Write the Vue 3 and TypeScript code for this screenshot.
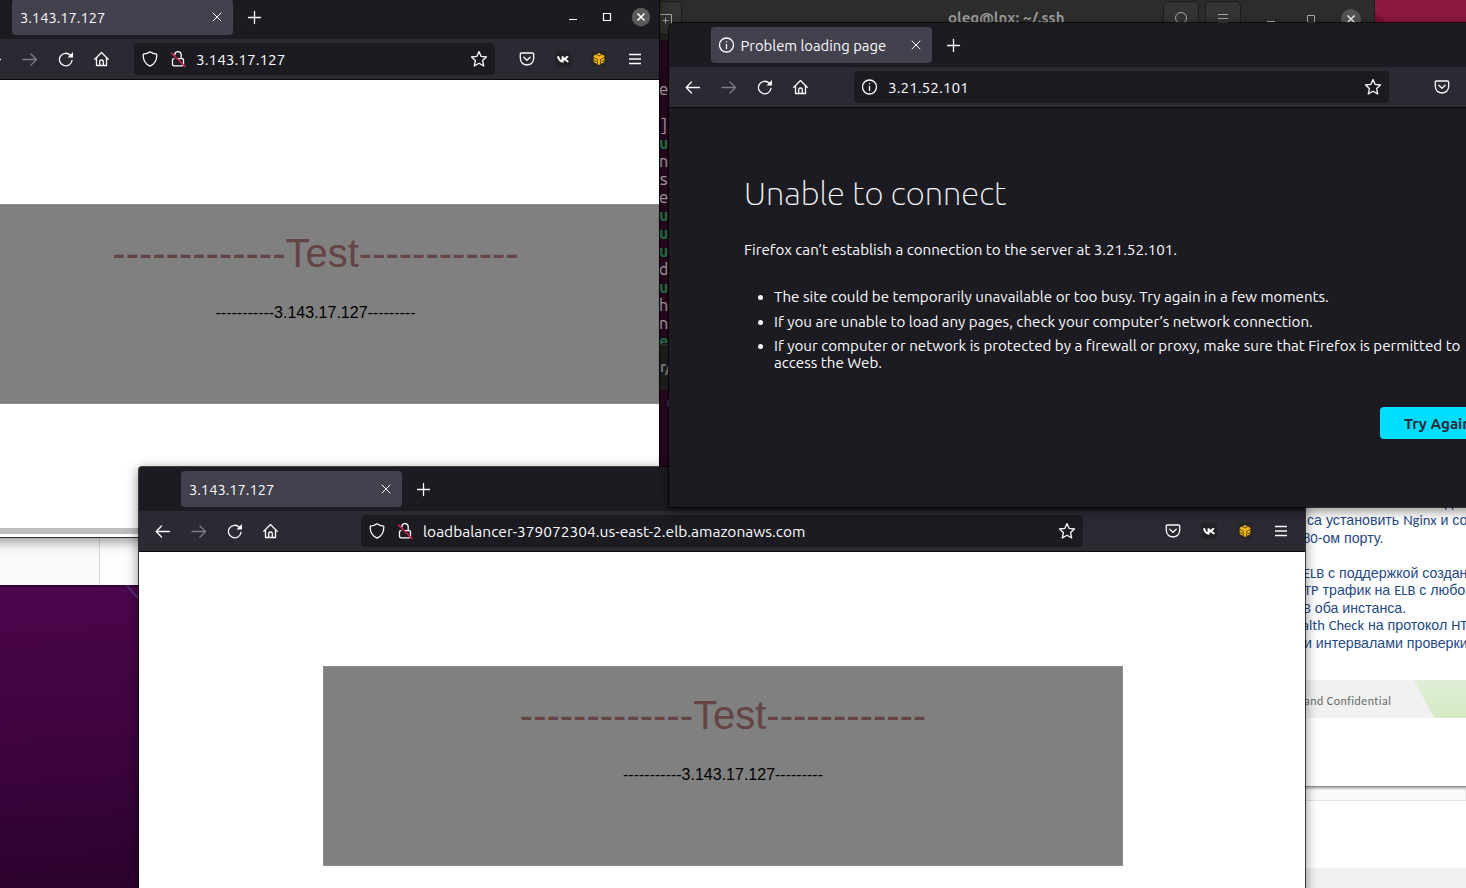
<script setup lang="ts">
interface BrowserWin {
  id: string
  tab: string
  url: string
  kind: 'page' | 'error'
  controls: boolean
}

const windows: BrowserWin[] = [
  { id: 'first', tab: '3.143.17.127', url: '3.143.17.127', kind: 'page', controls: true },
  { id: 'balancer', tab: '3.143.17.127', url: 'loadbalancer-379072304.us-east-2.elb.amazonaws.com', kind: 'page', controls: false },
  { id: 'failed', tab: 'Problem loading page', url: '3.21.52.101', kind: 'error', controls: false },
]

const termRows: { t: string; g?: boolean }[] = [
  { t: 'e' }, { t: '' }, { t: ']' }, { t: 'u', g: true }, { t: 'n' }, { t: 's' }, { t: 'e' },
  { t: 'u', g: true }, { t: 'u', g: true }, { t: 'u', g: true }, { t: 'd' }, { t: 'u', g: true },
  { t: 'h' }, { t: 'n' }, { t: 'e', g: true },
]

const docLines = [
  'с использованием создания',
  'са установить Nginx и соз',
  '80-ом порту.',
  '',
  'ELB с поддержкой создан',
  'TP трафик на ELB с любог',
  'B оба инстанса.',
  'alth Check на протокол HTT',
  'и интервалами проверки',
]

// Latin runs use a humanist face, Cyrillic falls to a grotesque one.
function runs(line: string): { text: string; latin: boolean }[] {
  return (line.match(/[A-Za-z0-9]+|[^A-Za-z0-9]+/g) ?? []).map((text) => ({
    text,
    latin: /[A-Za-z0-9]/.test(text),
  }))
}
</script>

<template>
  <div class="desktop">
    <svg class="arc" width="20" height="20" viewBox="0 0 20 20"><path d="M7 0Q12 8 20 14" /></svg>

    <section class="doc">
      <div class="doc-text">
        <p v-for="(line, i) in docLines" :key="i" :class="'l' + i"><span v-for="(r, j) in runs(line)" :key="j" :class="{ lat: r.latin }">{{ r.text }}</span></p>
      </div>
      <div class="doc-foot">
        <span>and Confidential</span>
        <svg width="52" height="38" viewBox="0 0 52 38">
          <defs><linearGradient id="leaf" x1="0" y1="0" x2="0" y2="1"><stop offset="0" stop-color="#dfeed5" /><stop offset="1" stop-color="#d4eac3" /></linearGradient></defs>
          <path d="M0 0H52V38H20Z" fill="url(#leaf)" />
        </svg>
      </div>
      <div class="doc-rest"></div>
      <div class="doc-gap"></div>
      <div class="doc-next"></div>
      <div class="doc-next-foot"></div>
    </section>

    <section class="files"><div class="files-side"></div></section>

    <section class="terminal">
      <header class="term-head">
        <div class="term-btn newtab">
          <svg width="16" height="16" viewBox="0 0 16 16"><path d="M1 3.5H12.5V13M6.5 6.500V12.500M3.5 9.500H9.5" /></svg>
        </div>
        <div class="term-title">oleg@lnx: ~/.ssh</div>
        <div class="term-btn"><svg width="16" height="16" viewBox="0 0 16 16"><circle cx="8" cy="7" r="5.5" /><path d="M12 11l3 3" /></svg></div>
        <div class="term-btn"><svg width="16" height="16" viewBox="0 0 16 16"><path d="M3 3.5H13M3 7.5H13M3 11.5H13" /></svg></div>
        <svg class="term-ctl" width="112" height="30" viewBox="0 0 112 30">
          <path d="M2 20.5H10M42.5 14.5H49.5V21.5H42.5Z" />
          <circle cx="86" cy="18" r="10" /><path class="x" d="M82.500 14.500L89.500 21.500M89.500 14.500L82.500 21.500" />
        </svg>
      </header>
      <div class="term-body">
        <div class="term-lines">
          <div v-for="(r, i) in termRows" :key="i" class="row" :class="{ green: r.g }">{{ r.t }}</div>
        </div>
        <div class="term-sub">r/</div>
        <div class="term-tail">r</div>
      </div>
    </section>

    <section v-for="w in windows" :key="w.id" class="win" :class="w.id">
      <header class="titlebar">
        <div class="tab">
          <svg v-if="w.kind === 'error'" class="ico info" width="16" height="16" viewBox="0 0 16 16"><circle cx="7.500" cy="8" r="7" /><path d="M7.500 7.500V11.500M7.500 4.600V4.800" /></svg>
          <span class="tab-label">{{ w.tab }}</span>
          <svg class="ico thin" width="16" height="16" viewBox="0 0 16 16"><path d="M4 4L12 12M12 4L4 12" /></svg>
        </div>
        <svg class="ico plus" width="16" height="16" viewBox="0 0 16 16"><path d="M7.500 2.500V14.500M1.500 8.500H13.500" /></svg>
        <svg v-if="w.controls" class="ctl" width="84" height="24" viewBox="0 0 84 24">
          <path d="M2 14.500H10M36.500 8.500H43.500V15.500H36.500Z" />
          <circle cx="74" cy="12" r="9.200" /><path d="M70.500 8.500L77.500 15.500M77.500 8.500L70.500 15.500" />
        </svg>
      </header>

      <div class="toolbar">
        <div class="nav">
          <svg class="ico" width="16" height="16" viewBox="0 0 16 16"><path d="M14.500 8.500H1.500M6.500 3L1.200 8.500L6.500 14" /></svg>
          <svg class="ico dim" width="16" height="16" viewBox="0 0 16 16"><path d="M1 8.500H14M9 3L14.500 8.500L9 14" /></svg>
          <svg class="ico" width="16" height="16" viewBox="0 0 16 16"><path d="M14 9.400A6.300 6.300 0 1 1 12.300 4.200" /><path class="solid" d="M15 1V6.500H9.500Z" /></svg>
          <svg class="ico" width="16" height="16" viewBox="0 0 16 16"><path d="M.8 8.200L7.500 1.500L14.200 8.200M2.500 7V14.500H12.500V7M5.700 14V10.200Q5.700 9 7.500 9T9.300 10.200V14" /></svg>
        </div>
        <div class="urlbar">
          <template v-if="w.kind === 'page'">
            <svg class="ico" width="16" height="16" viewBox="0 0 16 16"><path d="M8 .8Q10.500 2.800 14.700 3.200Q15.500 11.500 8 15.200Q.5 11.500 1.300 3.200Q5.500 2.800 8 .8Z" /></svg>
            <svg class="ico lock" width="16" height="16" viewBox="0 0 16 16"><path d="M4.800 4V3.800A3.200 3.200 0 0 1 11.200 4V7.500M8 7.700H12.500Q13.500 7.700 13.500 9V13.500Q13.500 14.800 12 14.800H4Q2.500 14.800 2.500 13V9Q2.500 7.700 4 7.700" /><path class="slash" d="M1.500 2L15 15.500" /></svg>
          </template>
          <svg v-else class="ico info" width="16" height="16" viewBox="0 0 16 16"><circle cx="7.500" cy="8" r="7" /><path d="M7.500 7.500V11.500M7.500 4.600V4.800" /></svg>
          <span class="url">{{ w.url }}</span>
          <svg class="ico star" width="18" height="18" viewBox="0 0 18 18"><path d="M9 1.600L11.200 6.400L16.500 7L12.600 10.600L13.700 16L9 13.300L4.300 16L5.400 10.600L1.500 7L6.800 6.400Z" /></svg>
        </div>
        <div class="ext">
          <svg class="ico" width="16" height="16" viewBox="0 0 16 16"><path d="M2.500 2H13.500Q14.700 2 14.700 3.200V7.500Q14.200 13.500 8 14Q1.800 13.500 1.300 7.500V3.200Q1.300 2 2.500 2ZM4.800 6.200L8 9.200L11.200 6.200" /></svg>
          <svg width="16" height="16" viewBox="0 0 16 16"><rect width="16" height="16" rx="3" fill="#222226" /><path d="M3 5.200Q4 10 7.600 10.500V5.200M12.800 5.200Q11.500 7.500 8 8Q11.500 8.500 13.200 11" fill="none" stroke="#fff" stroke-width="2" /></svg>
          <svg width="16" height="16" viewBox="0 0 16 16"><rect width="16" height="16" rx="3" fill="#26262a" /><path d="M8 2L13.300 4.800V11L8 14L2.700 11V4.800Z" fill="#f5b80e" /><path d="M3 6.500L6.300 8.500V13M13 6.500L9.700 8.500V13M5.300 3.500L8 5L10.700 3.500M3 9.500L5 10.700M13 9.500L11 10.700" fill="none" stroke="#2b2611" stroke-width=".8" /></svg>
          <svg class="ico menu" width="16" height="16" viewBox="0 0 16 16"><path d="M2 3.500H14M2 8H14M2 12.500H14" /></svg>
        </div>
      </div>

      <main v-if="w.kind === 'page'" class="page">
        <div class="card">
          <h1>-------------Test------------</h1>
          <p>-----------3.143.17.127---------</p>
        </div>
        <div class="strip"></div>
      </main>
      <main v-else class="error">
        <h1>Unable to connect</h1>
        <p class="lead">Firefox can’t establish a connection to the server at 3.21.52.101.</p>
        <ul>
          <li>The site could be temporarily unavailable or too busy. Try again in a few moments.</li>
          <li>If you are unable to load any pages, check your computer’s network connection.</li>
          <li>If your computer or network is protected by a firewall or proxy, make sure that Firefox is permitted to<br />access the Web.</li>
        </ul>
        <button>Try Again</button>
      </main>
    </section>
  </div>
</template>

<style>
html, body { margin: 0; overflow: hidden; }
</style>

<style scoped>
* { box-sizing: border-box; }
svg { display: block; flex: none; }
h1, p, ul { margin: 0; padding: 0; font-weight: 400; }
.desktop {
  position: relative; width: 1466px; height: 888px; overflow: hidden;
  font-family: Ubuntu, "Noto Sans", sans-serif;
  background: linear-gradient(176deg, #4b064c 0, #4b064c 590px, #3f0440 740px, #2b022d 890px);
}
.desktop::before {
  content: ""; position: absolute; left: 1370px; top: 0; width: 96px; height: 60px;
  background: linear-gradient(40deg, #7b0f37 0 36%, #8c1a3e 37%);
}
.arc { position: absolute; left: 120px; top: 585px; fill: none; stroke: #55307c; stroke-width: 2; }

.doc { position: absolute; left: 1300px; top: 490px; width: 166px; height: 398px; display: flex; flex-direction: column; background: #fff; overflow: hidden; }
.doc-text { height: 190px; padding-top: 4px; color: #1f4a83; font: 14.200px/17.500px "Liberation Sans", sans-serif; white-space: pre; }
.doc-text p { height: 17.500px; }
.doc-text .l0 { height: 18px; line-height: 16px; }
.lat { font-family: Carlito, Lato, sans-serif; font-size: 14.500px; }
.l1 { padding-left: 7px; }
.l2 { padding-left: 3px; }
.l4 { padding-left: 3px; }
.l5 { padding-left: 4px; }
.l6 { padding-left: 3px; }
.l7 { padding-left: 2px; }
.l8 { padding-left: 4px; }
.doc-foot { height: 38px; background: #f1f1f1; display: flex; align-items: center; justify-content: space-between; padding-left: 4px; color: #6b6b6b; font: 12px/16px Carlito, Lato, sans-serif; letter-spacing: .45px; flex: none; white-space: nowrap; }
.doc-foot span { padding-top: 4px; }
.doc-rest { height: 68px; flex: none; }
.doc-gap { height: 15px; flex: none; background: #fafafa; border-top: 1px solid #858a87; border-bottom: 1px solid #e2e2e2; box-shadow: inset 0 2px 2px #bbb; }
.doc-next { height: 67px; flex: none; }
.doc-next-foot { flex: 1; background: #f1f1f1; }

.files { position: absolute; left: 0; top: 537px; width: 140px; height: 48px; background: #fdfdfd; display: flex; box-shadow: 0 1px 2px #0008; }
.files-side { width: 100px; background: #fafafa; border-right: 1px solid #dcdcdc; }

.terminal { position: absolute; left: 640px; top: -6px; width: 735px; height: 480px; display: flex; flex-direction: column; background: #2d0922; }
.term-head { height: 47px; flex: none; display: flex; align-items: flex-start; padding-top: 7px; background: linear-gradient(#2b2b2b, #2e2e2e 80%, #262626); border-bottom: 1px solid #191919; border-right: 1px solid #1d1d1d; }
.term-btn { width: 36px; height: 34px; border: 1px solid #1d1d1d; border-radius: 5px; background: #343434; display: flex; justify-content: center; padding-top: 9px; margin-right: 6px; }
.newtab { width: 42px; margin: 0; justify-content: flex-end; padding-right: 6px; }
.term-btn svg, .term-ctl { fill: none; stroke: #a9a9a6; stroke-width: 1; }
.term-title { flex: 1; padding: 7px 0 0 266px; color: #9b9b98; font-size: 15.100px; line-height: 20px; font-weight: 700; white-space: nowrap; }
.term-ctl { width: 112px; height: 30px; margin: 0 -3px 0 18px; }
.term-ctl circle { fill: #535353; stroke: none; }
.term-ctl .x { stroke: #eee; stroke-width: 1.6; }
.term-body { font: 16.500px/18px "Ubuntu Mono", "DejaVu Sans Mono", monospace; color: #c5bfc4; flex: 1; }
.term-lines { height: 303px; padding-top: 39px; overflow: hidden; }
.row { height: 18px; padding-left: 19px; }
.green { color: #26854f; font-weight: 700; }
.term-sub { height: 46px; background: #242424; border-top: 1px solid #3a3a3a; padding: 12px 0 0 20px; font: 700 14.500px/20px Ubuntu, "Noto Sans", sans-serif; color: #999; }
.term-tail { padding: 3px 0 0 26px; font-size: 15px; }

.win { position: absolute; display: flex; flex-direction: column; background: #1c1b22; box-shadow: 0 3px 12px 1px rgba(0, 0, 0, .45), 0 0 0 1px rgba(0, 0, 0, .7); }
.first { left: -30px; top: -5px; width: 689px; height: 542px; }
.balancer { left: 139px; top: 467px; width: 1166px; height: 440px; border-radius: 3px 7px 0 0; }
.failed { left: 669px; top: 23px; width: 905px; height: 484px; border-radius: 6px 7px 0 0; }
.titlebar { height: 44px; flex: none; display: flex; align-items: center; padding-left: 42px; }
.tab { width: 221px; height: 36px; border-radius: 4px; background: #42414d; color: #fbfbfe; display: flex; align-items: center; padding: 0 8px; font-size: 14.670px; white-space: nowrap; }
.failed .tab { font-size: 14.800px; }
.tab .info { margin-right: 5.500px; }
.tab-label { flex: 1; line-height: 20px; padding-top: 2px; }
.plus { margin-left: 14px; }
.ctl { margin: 0 8px 0 auto; fill: none; stroke: #fff; stroke-width: 1; }
.ctl path:first-child { stroke-width: 1.2; }
.ctl circle { fill: #5a5a5a; stroke: none; }
.ctl path:last-child { stroke-width: 1.600; }
.toolbar { height: 41px; flex: none; background: #2b2a33; border-bottom: 1px solid #0c0c0d; display: flex; align-items: center; padding: 0 16px; }
.nav, .ext { display: flex; gap: 20px; }
.ico { fill: none; stroke: #fbfbfe; stroke-width: 1.300; stroke-linecap: round; stroke-linejoin: round; }
.ico .solid { fill: #fbfbfe; stroke: none; }
.thin { stroke-width: 1; }
.dim { opacity: .4; }
.menu { stroke-linecap: butt; }
.lock .slash { stroke: #e0224e; stroke-width: 1.500; }
.urlbar { flex: 1; height: 32px; border-radius: 4px; background: #1c1b22; display: flex; align-items: center; padding: 0 7px 0 8px; color: #fbfbfe; font-size: 15.400px; white-space: nowrap; }
.lock { margin-left: 12px; }
.url { flex: 1; margin-left: 10px; line-height: 20px; padding-top: 2px; }
.first .urlbar { margin: 0 24px 0 24px; }
.balancer .urlbar { margin: 0 82px; font-size: 15.520px; }
.failed .urlbar { margin: 0 45px; }

.page { flex: 1; background: #fff; overflow: hidden; font-family: Arial, "Liberation Sans", sans-serif; text-align: center; display: flex; flex-direction: column; }
.card { width: 800px; height: 200px; flex: none; background: #808080; border: 1px solid #8c8c8c; padding-top: 25px; }
.first .card { margin: 124px 0 0 -54.500px; }
.balancer .card { margin: 114px 0 0 184px; }
.card h1 { font-size: 40px; line-height: 46px; color: #644444; white-space: nowrap; }
.card p { font-size: 16px; line-height: 18px; margin-top: 28px; color: #000; white-space: nowrap; }
.strip { display: none; }
.first .strip { display: block; margin-top: auto; height: 6px; margin-bottom: 3px; background: #bdbdbd; flex: none; }

.error { flex: 1; color: #fbfbfe; padding: 65px 0 0 75px; font-size: 15.170px; line-height: 17px; white-space: nowrap; }
.error h1 { font-family: "Ubuntu Light", Ubuntu, "Noto Sans", sans-serif; font-weight: 100; font-size: 33px; line-height: 40px; -webkit-text-stroke: .2px #fbfbfe; }
.lead { margin-top: 28px; }
.error ul { margin-top: 30px; padding-left: 30px; }
.error li { margin-bottom: 7.700px; }
.error button { display: block; margin: 36px 0 0 636px; width: 120px; height: 32px; padding: 2px 0 0 24px; text-align: left; border: 0; border-radius: 4px; background: #00ddff; color: #2b2a33; font: 700 15.150px/20px Ubuntu, "Noto Sans", sans-serif; }
</style>
